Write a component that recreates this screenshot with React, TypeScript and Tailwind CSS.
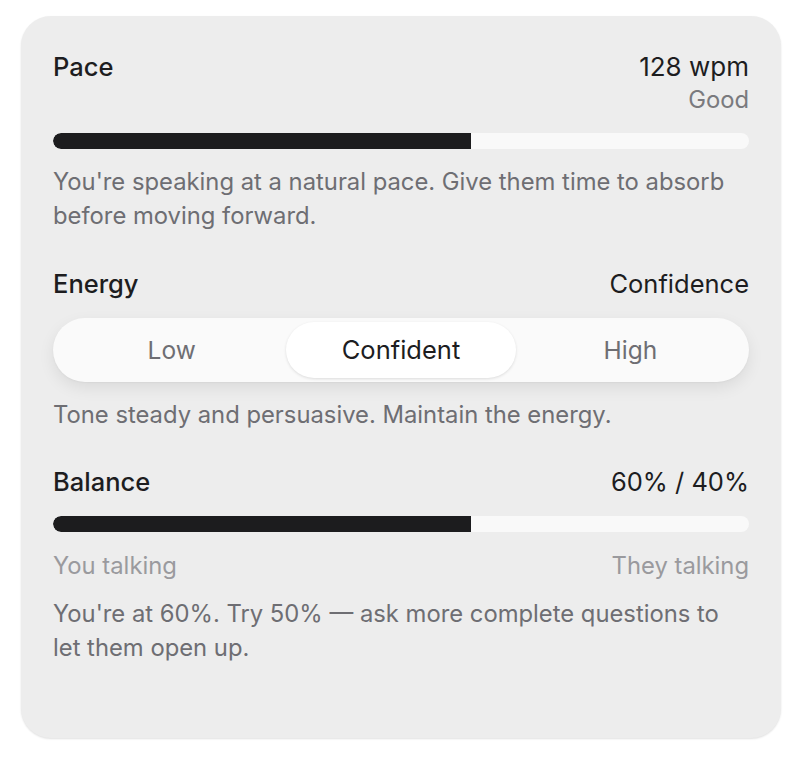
import React from "react";

function Bar({ pct }: { pct: number }) {
  return (
    <div className="h-4 w-full rounded-full bg-[#f9f9f9] overflow-hidden flex">
      <div className="h-full bg-[#1c1c1e] rounded-l-full" style={{ width: `${pct}%` }} />
    </div>
  );
}

export default function App() {
  return (
    <div
      className="w-[800px] h-[760px] bg-white pt-4 pl-[21px] pr-[19px]"
      style={{ fontFamily: "Inter, 'Noto Sans', sans-serif" }}
    >
      <div className="w-[760px] h-[722px] rounded-[30px] bg-[#ededed] shadow-[0_1px_2px_rgba(0,0,0,0.12)] px-8 pt-[34px] flex flex-col">
        {/* Pace */}
        <div className="flex justify-between items-start">
          <div className="font-medium text-[25.5px] leading-[33px] text-[#1d1d1f]">Pace</div>
          <div className="flex flex-col items-end">
            <div className="text-[26px] leading-[33px] text-[#1d1d1f]">128 wpm</div>
            <div className="text-[#7a7a7e] text-[23.8px] leading-[33px]">Good</div>
          </div>
        </div>
        <div className="mt-[17px]">
          <Bar pct={60} />
        </div>
        <p className="mt-4 text-[23.8px] leading-[34px] text-[#6e6e73]">
          You're speaking at a natural pace. Give them time to absorb before moving forward.
        </p>

        {/* Energy */}
        <div className="mt-[34px] flex justify-between items-center text-[25.5px] leading-[34px] text-[#1d1d1f]">
          <div className="font-medium">Energy</div>
          <div>Confidence</div>
        </div>
        <div className="mt-[17px] h-16 rounded-full bg-[#fafafa] p-1 grid grid-cols-3 shadow-[0_6px_16px_rgba(0,0,0,0.08),0_1px_2px_rgba(0,0,0,0.04)] text-[24.5px]">
          <div className="flex items-center justify-center text-[#6e6e73]">Low</div>
          <div className="flex items-center justify-center rounded-full bg-white text-[#1d1d1f] text-[25.5px] shadow-[0_1px_3px_rgba(0,0,0,0.12)]">
            Confident
          </div>
          <div className="flex items-center justify-center text-[#6e6e73]">High</div>
        </div>
        <p className="mt-4 text-[23.8px] leading-[34px] text-[#6e6e73]">
          Tone steady and persuasive. Maintain the energy.
        </p>

        {/* Balance */}
        <div className="mt-[33px] flex justify-between items-center text-[25.5px] leading-[34px] text-[#1d1d1f]">
          <div className="font-medium">Balance</div>
          <div>60% / 40%</div>
        </div>
        <div className="mt-[17px]">
          <Bar pct={60} />
        </div>
        <div className="mt-[17px] flex justify-between text-[23.8px] leading-[34px] text-[#9a9a9e]">
          <span>You talking</span>
          <span>They talking</span>
        </div>
        <p className="mt-[14px] text-[23.8px] leading-[34px] text-[#6e6e73]">
          You're at 60%. Try 50% — ask more complete questions to
          <br />
          let them open up.
        </p>
      </div>
    </div>
  );
}
